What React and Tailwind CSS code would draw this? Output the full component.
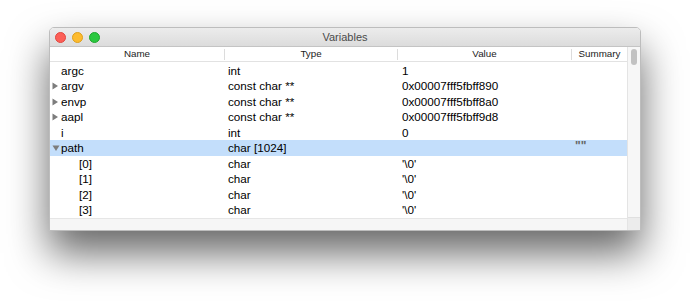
import React from "react";

const rows = [
  { name: "argc", type: "int", value: "1", tri: null, indent: false },
  { name: "argv", type: "const char **", value: "0x00007fff5fbff890", tri: "right" },
  { name: "envp", type: "const char **", value: "0x00007fff5fbff8a0", tri: "right" },
  { name: "aapl", type: "const char **", value: "0x00007fff5fbff9d8", tri: "right" },
  { name: "i", type: "int", value: "0", tri: null },
  { name: "path", type: "char [1024]", value: "", summary: '""', tri: "down", selected: true },
  { name: "[0]", type: "char", value: "'\\0'", indent: true },
  { name: "[1]", type: "char", value: "'\\0'", indent: true },
  { name: "[2]", type: "char", value: "'\\0'", indent: true },
  { name: "[3]", type: "char", value: "'\\0'", indent: true },
];

function Tri({ dir }) {
  if (dir === "right")
    return (
      <svg width="7" height="8" viewBox="0 0 7 8" className="absolute left-[2px] top-[4px]">
        <path d="M0.5 0.5 L6 4 L0.5 7.5 Z" fill="#7d7d7d" />
      </svg>
    );
  return (
    <svg width="8" height="7" viewBox="0 0 8 7" className="absolute left-[2px] top-[5px]">
      <path d="M0.5 0.5 L7.5 0.5 L4 6 Z" fill="#7d7d7d" />
    </svg>
  );
}

export default function App() {
  return (
    <div
      className="w-[690px] h-[301px] bg-white pl-[49px] pt-[27px] overflow-hidden"
      style={{ fontFamily: '"Liberation Sans", Arial, sans-serif' }}
    >
      <div className="w-[592px] h-[204px] flex flex-col rounded-t-[5px] border border-[#bdbdbd] bg-white shadow-[0_22px_40px_rgba(0,0,0,0.6)] overflow-hidden">
        {/* Title bar */}
        <div className="relative h-[19px] flex items-center bg-gradient-to-b from-[#ececec] to-[#dcdcdc] border-b border-[#c4c4c4]">
          <div className="flex gap-[6px] ml-[5px]">
            <div className="w-[11px] h-[11px] rounded-full bg-[#fc5f57] border border-[#e1463f]" />
            <div className="w-[11px] h-[11px] rounded-full bg-[#fdbb2e] border border-[#de9f1b]" />
            <div className="w-[11px] h-[11px] rounded-full bg-[#2ac83f] border border-[#1fa52e]" />
          </div>
          <div className="absolute inset-0 flex items-center justify-center text-[11px] text-[#4a4a4a]">
            Variables
          </div>
        </div>
        {/* Body */}
        <div className="flex flex-1 min-h-0">
          <div className="flex flex-col w-[577px]">
            {/* Header */}
            <div className="flex h-[15px] border-b border-[#e2e2e2] text-[9.8px] text-[#222] bg-white">
              <div className="w-[174px] flex items-center justify-center">Name</div>
              <div className="w-px h-[11px] mt-[2px] bg-[#dcdcdc]" />
              <div className="w-[172px] flex items-center justify-center">Type</div>
              <div className="w-px h-[11px] mt-[2px] bg-[#dcdcdc]" />
              <div className="w-[173px] flex items-center justify-center">Value</div>
              <div className="w-px h-[11px] mt-[2px] bg-[#dcdcdc]" />
              <div className="flex-1 flex items-center justify-center">Summary</div>
            </div>
            {/* Rows */}
            <div className="flex-1 flex flex-col text-[11.7px] text-black pt-[0.5px]">
              {rows.map((r, i) => (
                <div
                  key={i}
                  className={`flex h-[15.55px] items-center ${r.selected ? "bg-[#c3defb]" : ""}`}
                >
                  <div className="relative w-[175px] h-full flex items-center">
                    {r.tri && <Tri dir={r.tri} />}
                    <span className={r.indent ? "ml-[29px]" : "ml-[11px]"}>{r.name}</span>
                  </div>
                  <div className="w-[173px] pl-[3px]">{r.type}</div>
                  <div className="w-[174px] pl-[4px]">{r.value}</div>
                  <div className="flex-1 pl-[3px] text-[#666] text-[12px] font-bold -mt-[4px]">{r.summary || ""}</div>
                </div>
              ))}
            </div>
            <div className="h-[13px] bg-[#f6f6f6] border-t border-[#e6e6e6]" />
          </div>
          {/* Vertical scrollbar */}
          <div className="flex-1 flex flex-col border-l border-[#e4e4e4] bg-[#f7f7f7]">
            <div className="flex-1 pt-[2px] flex justify-center">
              <div className="w-[6px] h-[16px] rounded-full bg-[#c2c2c2]" />
            </div>
            <div className="h-[13px] bg-[#ececec] border-t border-[#e0e0e0]" />
          </div>
        </div>
      </div>
    </div>
  );
}
